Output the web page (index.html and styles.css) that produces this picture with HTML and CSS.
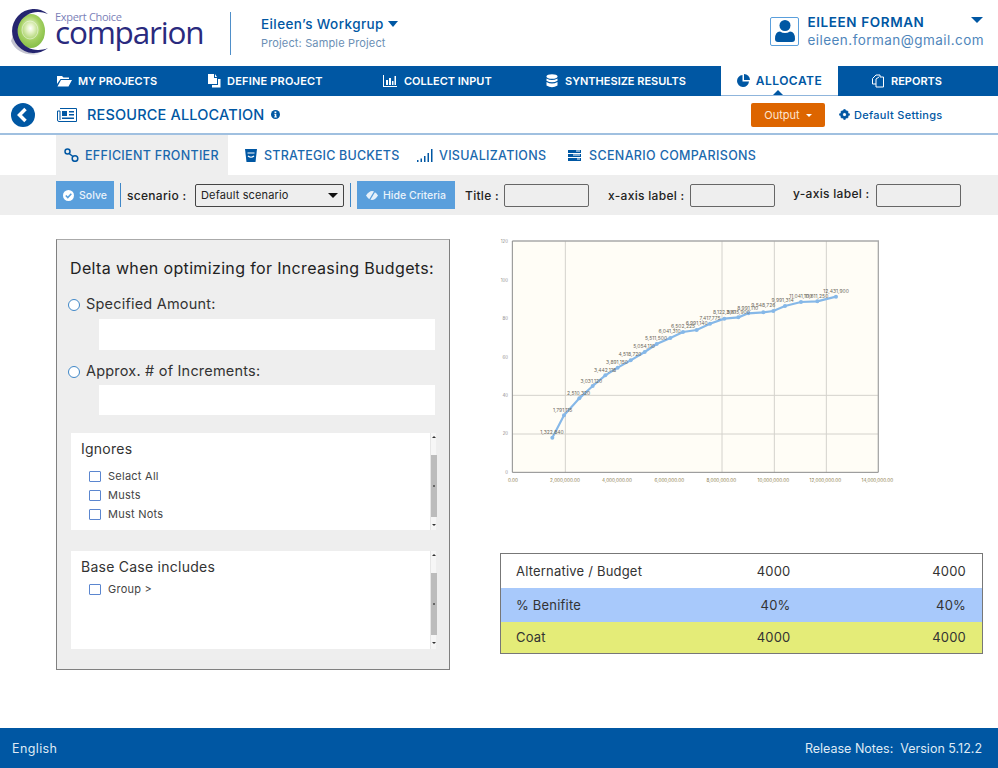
FILE: index.html
```html
<!DOCTYPE html>
<html lang="en">
<head>
    <meta charset="UTF-8">
    <title>Expert Choice Comparion - Resource Allocation</title>
    <link rel="stylesheet" href="styles.css">
</head>
<body>
    <header class="top">
        <div class="logo">
            <svg class="logo-mark" width="48" height="50" viewBox="0 0 48 50">
                <defs>
                    <radialGradient id="swirl" cx="0.48" cy="0.42" r="0.6">
                        <stop offset="0" stop-color="#ffffff"/>
                        <stop offset="0.2" stop-color="#e6f3c8"/>
                        <stop offset="0.6" stop-color="#a4d062"/>
                        <stop offset="1" stop-color="#84bd45"/>
                    </radialGradient>
                </defs>
                <path d="M5 34 Q12 50 34 47 Q16 46 7 28Z" fill="#c4c4d0"/>
                <ellipse cx="25" cy="24" rx="14" ry="17" fill="url(#swirl)"/>
                <ellipse cx="24" cy="23" rx="8" ry="9" fill="none" stroke="#ffffff" stroke-opacity="0.45"/>
                <path d="M42 7 A22 22 0 1 0 42 41 A21 19 0 1 1 42 7Z" fill="#25256f"/>
            </svg>
            <div class="logo-text">
                <span class="logo-small">Expert Choice</span>
                <span class="logo-big">comparion</span>
            </div>
        </div>
        <div class="workgroup">
            <div class="workgroup-name">Eileen’s Workgrup <span class="caret"></span></div>
            <div class="workgroup-project">Project: Sample Project</div>
        </div>
        <div class="user">
            <div class="user-pic">
                <svg width="20" height="22" viewBox="0 0 20 22"><circle cx="10" cy="5.500" r="5.500" fill="#0057a3"/><path d="M0 19 Q0 11.500 5 11.500 Q10 14.500 15 11.500 Q20 11.500 20 19 Q20 22 17 22 L3 22 Q0 22 0 19Z" fill="#0057a3"/></svg>
            </div>
            <div class="user-info">
                <div class="user-name">EILEEN FORMAN <span class="caret"></span></div>
                <div class="user-mail">eileen.forman@gmail.com</div>
            </div>
        </div>
    </header>

    <nav class="nav">
        <a class="nav-item w1">
            <svg width="15" height="12" viewBox="0 0 15 12"><path d="M0 1 H5 L6.500 2.500 H12 V4 H3.500 L0 9Z M4 5 H15 L11.500 11.500 H0.500Z" fill="#fff"/></svg>
            MY PROJECTS</a>
        <a class="nav-item w2">
            <svg width="13" height="14" viewBox="0 0 13 14"><path d="M0 0 H6 V4 H9 V10 H0Z M7 0 L9 3 H7Z" fill="#fff"/><path d="M10 5 H12.500 V13.500 H4 V11 H10Z" fill="#fff"/></svg>
            DEFINE PROJECT</a>
        <a class="nav-item w3">
            <svg width="14" height="12" viewBox="0 0 14 12"><path d="M0 0 H1 V11 H14 V12 H0Z M3 5 H5 V10 H3Z M6 3 H8 V10 H6Z M9 6 H10.500 V10 H9Z M11.500 1 H13 V10 H11.500Z" fill="#fff"/></svg>
            COLLECT INPUT</a>
        <a class="nav-item w4">
            <svg width="12" height="14" viewBox="0 0 12 14"><ellipse cx="6" cy="2.500" rx="5.500" ry="2.300" fill="#fff"/><path d="M0.500 4.500 Q6 7.500 11.500 4.500 V6.800 Q6 9.800 0.500 6.800Z M0.500 8 Q6 11 11.500 8 V11.500 Q6 15 0.500 11.500Z" fill="#fff"/></svg>
            SYNTHESIZE RESULTS</a>
        <a class="nav-item nav-active">
            <svg width="13" height="13" viewBox="0 0 13 13"><path d="M5.500 1 V7.500 H12 A6 6 0 1 1 5.500 1Z M7 0 A6 6 0 0 1 13 6 H7Z" fill="#0057a3"/></svg>
            ALLOCATE</a>
        <a class="nav-item nav-last">
            <svg width="14" height="14" viewBox="0 0 14 14"><path d="M5 1 H9 V3 H12.500 V13 H5 V10 H1.500 V4.500Z" fill="none" stroke="#fff"/><path d="M5 10 V5 L8 3" fill="none" stroke="#fff"/></svg>
            REPORTS</a>
    </nav>

    <section class="subhead">
        <svg class="back" width="24" height="24" viewBox="0 0 24 24"><circle cx="12" cy="12" r="12" fill="#0057a3"/><path d="M14.500 6 L8.500 12 L14.500 18" fill="none" stroke="#fff" stroke-width="3.500"/></svg>
        <svg class="paper" width="20" height="14" viewBox="0 0 20 14"><path d="M3 .5 H19.500 V13.500 H2 Q.5 13.500 .5 12 V3 H3 V12" fill="none" stroke="#0057a3"/><path d="M5 3 H10 V8 H5Z M12 3 H17 V4.500 H12Z M12 6 H17 V7.500 H12Z M5 9.500 H17 V11 H5Z" fill="#0057a3"/></svg>
        <h1 class="subhead-title">RESOURCE ALLOCATION</h1>
        <svg class="info" width="9" height="9" viewBox="0 0 9 9"><circle cx="4.500" cy="4.500" r="4.500" fill="#0057a3"/><path d="M3.500 1.500 H5.300 V3 H3.500Z M3.300 3.800 H5.300 V6.500 H5.800 V7.500 H3.200 V6.500 H3.800 V4.800 H3.300Z" fill="#fff"/></svg>
        <button class="output-btn">Output <span class="caret-small"></span></button>
        <a class="settings">
            <svg width="11" height="11" viewBox="0 0 11 11"><circle cx="5.500" cy="5.500" r="3.200" fill="none" stroke="#0057a3" stroke-width="2.400"/><path d="M4.500 0 H6.500 V11 H4.500Z M0 4.500 H11 V6.500 H0Z M1.400 2.800 L2.800 1.400 L9.600 8.200 L8.200 9.600Z M8.200 1.400 L9.600 2.800 L2.800 9.600 L1.400 8.200Z" fill="#0057a3" fill-opacity="0.85"/><circle cx="5.500" cy="5.500" r="1.500" fill="#fff"/></svg>
            Default Settings</a>
    </section>

    <section class="tabs">
        <a class="tab tab-active">
            <svg width="15" height="14" viewBox="0 0 15 14"><circle cx="3.500" cy="3.500" r="2.500" fill="none" stroke="#0057a3" stroke-width="1.500"/><circle cx="11" cy="10.500" r="2.800" fill="none" stroke="#0057a3" stroke-width="1.500"/><path d="M5 5.500 L9 8.500" stroke="#0057a3" stroke-width="1.500"/></svg>
            EFFICIENT FRONTIER</a>
        <a class="tab tab-buckets">
            <svg width="12" height="13" viewBox="0 0 12 13"><path d="M0 0 H12 L10.500 13 H1.500Z" fill="#0057a3"/><path d="M2.500 4 H9.500 M3 7 Q6 9.500 9 7" fill="none" stroke="#fff" stroke-width="1.200"/></svg>
            STRATEGIC BUCKETS</a>
        <a class="tab tab-vis">
            <svg width="16" height="13" viewBox="0 0 16 13"><path d="M0 11 H1.500 V13 H0Z M3.500 9.500 H5 V13 H3.500Z M7 7 H8.500 V13 H7Z M10.500 4 H12 V13 H10.500Z M14 0 H15.500 V13 H14Z" fill="#0057a3"/></svg>
            VISUALIZATIONS</a>
        <a class="tab tab-scen">
            <svg width="13" height="11" viewBox="0 0 13 11"><path d="M0 0 H13 V3 H0Z M0 4 H13 V7 H0Z M0 8 H13 V11 H0Z" fill="#0057a3"/><path d="M8 1 H12 M5 5 H12 M9 9 H12" stroke="#fff"/></svg>
            SCENARIO COMPARISONS</a>
    </section>

    <section class="toolbar">
        <button class="tool-btn solve-btn">
            <svg width="11" height="11" viewBox="0 0 11 11"><circle cx="5.500" cy="5.500" r="5.500" fill="#fff"/><path d="M2.800 5.500 L4.800 7.500 L8.300 3.800" fill="none" stroke="#5a9fdc" stroke-width="1.600"/></svg>
            Solve</button>
        <span class="tool-sep"></span>
        <label class="tool-label scenario-label">scenario :</label>
        <div class="select">Default scenario <span class="select-arrow"></span></div>
        <span class="tool-sep sep2"></span>
        <button class="tool-btn hide-btn">
            <svg width="12" height="9" viewBox="0 0 12 9"><path d="M0 4.500 Q3 0 6 0 Q9 0 12 4.500 Q9 9 6 9 Q3 9 0 4.500Z" fill="#fff" fill-opacity="0.85"/><path d="M9 0 L3.500 9" stroke="#5a9fdc" stroke-width="1.300"/></svg>
            Hide Criteria</button>
        <label class="tool-label title-label">Title :</label>
        <input class="tool-input" type="text">
        <label class="tool-label x-label">x-axis label :</label>
        <input class="tool-input" type="text">
        <label class="tool-label y-label">y-axis label :</label>
        <input class="tool-input" type="text">
    </section>

    <main class="content">
        <aside class="panel">
            <h2 class="panel-title">Delta when optimizing for Increasing Budgets:</h2>
            <div class="radio-row r1"><span class="radio"></span>Specified Amount:</div>
            <div class="white-field"></div>
            <div class="radio-row r2"><span class="radio"></span>Approx. # of Increments:</div>
            <div class="white-field f2"></div>

            <div class="list-box">
                <div class="list-body">
                    <h3 class="list-title">Ignores</h3>
                    <div class="check-row"><span class="check"></span>Selact All</div>
                    <div class="check-row"><span class="check"></span>Musts</div>
                    <div class="check-row"><span class="check"></span>Must Nots</div>
                </div>
                <div class="scrollbar"><span class="sb-arrow"></span><span class="sb-thumb"></span><span class="sb-arrow down"></span></div>
            </div>

            <div class="list-box box2">
                <div class="list-body">
                    <h3 class="list-title base">Base Case includes</h3>
                    <div class="check-row group"><span class="check"></span>Group &gt;</div>
                </div>
                <div class="scrollbar"><span class="sb-arrow"></span><span class="sb-thumb"></span><span class="sb-arrow down"></span></div>
            </div>
        </aside>

        <div class="right">
            <!-- chart: 3x zoom coordinates, hence the viewBox -->
            <svg class="chart" width="410" height="255" viewBox="0 0 1230 765">
                <rect x="67" y="18" width="1098" height="694" fill="#fffdf6"/>
                <g stroke="#d4d2cc" stroke-width="3">
                    <path d="M226 18 V712 M696 18 V712 M853 18 V712 M1009 18 V712 M67 481 H1165 M67 597 H1165"/>
                </g>
                <path d="M67 18 H1165 V712" fill="none" stroke="#a9a9a9" stroke-width="4"/>
                <path d="M67 18 V712 H1165" fill="none" stroke="#8b8b8b" stroke-width="3"/>
                <polyline class="curve" points="187,608 222,541 268,490 308,453 346,421 383,398 422,376 464,351 500,327 541,309 579,291 620,285 660,266 703,251 745,247 775,235 820,232 850,228 885,213 933,201 982,199 1038,185"/>
                <g fill="#86b8e8">
                    <circle cx="187" cy="608" r="6"/><circle cx="222" cy="541" r="6"/><circle cx="268" cy="490" r="6"/><circle cx="308" cy="453" r="6"/><circle cx="346" cy="421" r="6"/><circle cx="383" cy="398" r="6"/><circle cx="422" cy="376" r="6"/><circle cx="464" cy="351" r="6"/><circle cx="500" cy="327" r="6"/><circle cx="541" cy="309" r="6"/><circle cx="579" cy="291" r="6"/><circle cx="620" cy="285" r="6"/><circle cx="660" cy="266" r="6"/><circle cx="703" cy="251" r="6"/><circle cx="745" cy="247" r="6"/><circle cx="775" cy="235" r="6"/><circle cx="820" cy="232" r="6"/><circle cx="850" cy="228" r="6"/><circle cx="885" cy="213" r="6"/><circle cx="933" cy="201" r="6"/><circle cx="982" cy="199" r="6"/><circle cx="1038" cy="185" r="6"/>
                </g>
                <g class="pt-label" text-anchor="middle">
                    <text x="186" y="596">1,322,840</text><text x="218" y="530">1,791,115</text><text x="266" y="479">2,510,320</text><text x="304" y="443">3,031,120</text><text x="345" y="410">3,442,118</text><text x="381" y="386">3,891,150</text><text x="420" y="362">4,518,720</text><text x="462" y="339">5,054,110</text><text x="498" y="316">5,511,500</text><text x="539" y="295">6,041,310</text><text x="579" y="279">6,502,225</text><text x="620" y="270">6,991,140</text><text x="660" y="255">7,417,775</text><text x="703" y="238">8,122,300</text><text x="745" y="236">8,615,900</text><text x="773" y="224">8,991,110</text><text x="820" y="216">9,548,726</text><text x="878" y="202">9,991,314</text><text x="932" y="189">11,041,100</text><text x="980" y="189">11,611,250</text><text x="1038" y="174">12,431,900</text>
                </g>
                <g class="y-tick" text-anchor="end">
                    <text x="54" y="24">120</text><text x="54" y="140">100</text><text x="54" y="255">80</text><text x="54" y="372">60</text><text x="54" y="486">40</text><text x="54" y="601">20</text><text x="54" y="716">0</text>
                </g>
                <g class="x-tick" text-anchor="middle">
                    <text x="69" y="741">0.00</text><text x="225" y="741">2,000,000.00</text><text x="381" y="741">4,000,000.00</text><text x="538" y="741">6,000,000.00</text><text x="694" y="741">8,000,000.00</text><text x="850" y="741">10,000,000.00</text><text x="1006" y="741">12,000,000.00</text><text x="1162" y="741">14,000,000.00</text>
                </g>
            </svg>

            <table class="budget-table">
                <tr>
                    <td>Alternative / Budget</td>
                    <td class="mid">4000</td>
                    <td class="end">4000</td>
                </tr>
                <tr class="row-blue">
                    <td>% Benifite</td>
                    <td class="mid">40%</td>
                    <td class="end">40%</td>
                </tr>
                <tr class="row-yellow">
                    <td>Coat</td>
                    <td class="mid">4000</td>
                    <td class="end">4000</td>
                </tr>
            </table>
        </div>
    </main>

    <footer class="footer">
        <span class="lang">English</span>
        <span>Release Notes:&nbsp; Version 5.12.2</span>
    </footer>
</body>
</html>
```

FILE: styles.css
```css
* {
    box-sizing: border-box;
}

body {
    margin: 0;
    width: 998px;
    height: 768px;
    overflow: hidden;
    display: flex;
    flex-direction: column;
    font-family: Inter, "Liberation Sans", sans-serif;
    background-color: white;
    color: #333;
}

a {
    color: inherit;
}

.caret {
    display: inline-block;
    border-left: 5px solid transparent;
    border-right: 5px solid transparent;
    border-top: 6px solid #0057a3;
    vertical-align: 2px;
}

/* top header */
.top {
    height: 66px;
    display: flex;
    align-items: center;
}

.logo {
    width: 230px;
    height: 66px;
    display: flex;
    padding: 7px 0 0 6px;
}

.logo-mark {
    flex: none;
}

.logo-text {
    margin-left: 1px;
    display: flex;
    flex-direction: column;
    font-family: "Open Sans", sans-serif;
}

.logo-small {
    font-size: 11px;
    line-height: 12px;
    margin-top: 4px;
    color: #7b7fb8;
    letter-spacing: -0.3px;
}

.logo-big {
    font-size: 31.500px;
    line-height: 16px;
    letter-spacing: -1.200px;
    color: #2a2a7e;
    margin-top: 1px;
}

.workgroup {
    height: 43px;
    border-left: 1px solid #4f8fc9;
    padding: 3px 0 0 30px;
}

.workgroup-name {
    font-size: 13.500px;
    line-height: 18px;
    font-weight: 500;
    letter-spacing: .4px;
    color: #0057a3;
}

.workgroup-project {
    font-size: 11px;
    line-height: 14px;
    margin-top: 3px;
    letter-spacing: .15px;
    color: #6b8fb5;
}

.user {
    margin-left: auto;
    margin-right: 14px;
    margin-bottom: 4px;
    display: flex;
    align-items: center;
}

.user-pic {
    width: 29px;
    height: 29px;
    border: 1px solid #5a9fdc;
    border-radius: 2px;
    display: flex;
    align-items: center;
    justify-content: center;
    margin-right: 8px;
}

.user-name {
    width: 176px;
    display: flex;
    justify-content: space-between;
    align-items: center;
    font-size: 13.500px;
    line-height: 18px;
    font-weight: 600;
    letter-spacing: .6px;
    color: #0057a3;
}

.user-name .caret {
    border-left-width: 6px;
    border-right-width: 6px;
    border-top-width: 6px;
    margin-bottom: 4px;
}

.user-mail {
    font-size: 13.500px;
    line-height: 18px;
    letter-spacing: .45px;
    color: #4f86bb;
}

/* main nav */
.nav {
    height: 30px;
    padding-left: 57px;
    display: flex;
    background-color: #0057a3;
    color: white;
    font-size: 11px;
    font-weight: 600;
}

.nav-item {
    display: flex;
    align-items: center;
    gap: 6px;
}

.w1 {
    width: 151px;
}

.w2 {
    width: 175px;
    letter-spacing: .2px;
}

.w3 {
    width: 163px;
    gap: 7px;
}

.w4 {
    width: 175px;
    gap: 7px;
}

.nav-active {
    position: relative;
    width: 117px;
    justify-content: center;
    background-color: white;
    border-bottom: 1px solid #8fb5dc;
    color: #0057a3;
    font-size: 12px;
    letter-spacing: .5px;
}

.nav-active::after {
    content: "";
    position: absolute;
    bottom: 0;
    left: 52px;
    border-left: 5px solid transparent;
    border-right: 5px solid transparent;
    border-bottom: 5px solid #0057a3;
}

.nav-last {
    margin-left: 33px;
}

/* sub header */
.subhead {
    height: 39px;
    display: flex;
    align-items: center;
    border-bottom: 2px solid #a0c0e0;
    color: #0057a3;
}

.back {
    margin-left: 11px;
}

.paper {
    margin-left: 22px;
}

.subhead-title {
    margin: 0 0 0 10px;
    font-size: 14.500px;
    font-weight: 500;
    letter-spacing: .17px;
}

.info {
    margin-left: 7px;
}

.output-btn {
    margin-left: auto;
    width: 74px;
    height: 24px;
    border: none;
    border-radius: 2px;
    background-color: #dd6500;
    color: #fde6d0;
    font-family: inherit;
    font-size: 11px;
    padding: 0;
}

.caret-small {
    display: inline-block;
    margin-left: 3px;
    border-left: 3px solid transparent;
    border-right: 3px solid transparent;
    border-top: 3px solid white;
    vertical-align: 2px;
}

.settings {
    display: flex;
    align-items: center;
    gap: 4px;
    width: 123px;
    margin-left: 14px;
    margin-right: 36px;
    font-size: 11px;
    font-weight: 500;
    letter-spacing: .3px;
}

/* tabs */
.tabs {
    height: 40px;
    padding-left: 56px;
    display: flex;
    color: #1a68ad;
    font-size: 12.500px;
    font-weight: 500;
    letter-spacing: .3px;
    white-space: nowrap;
}

.tab {
    display: flex;
    align-items: center;
    gap: 6px;
}

.tab-active {
    width: 172px;
    padding-left: 8px;
    background-color: #eeeeee;
}

.tab-buckets {
    width: 172px;
    padding-left: 17px;
    gap: 7px;
    letter-spacing: .2px;
}

.tab-vis {
    width: 168px;
    padding-left: 17px;
}

.tab-scen {
    gap: 8px;
    letter-spacing: .35px;
}

/* toolbar */
.toolbar {
    height: 40px;
    padding-left: 56px;
    display: flex;
    align-items: center;
    background-color: #eeeeee;
    color: #222;
}

.tool-btn {
    height: 28px;
    display: flex;
    align-items: center;
    justify-content: center;
    gap: 5px;
    border: none;
    padding: 0;
    background-color: #5a9fdc;
    color: #eaf3fb;
    font-family: inherit;
    font-size: 10.500px;
    font-weight: 500;
}

.solve-btn {
    width: 58px;
}

.hide-btn {
    width: 98px;
    margin-left: 6px;
}

.tool-sep {
    width: 1px;
    height: 24px;
    margin-left: 6px;
    background-color: #3f87c7;
}

.sep2 {
    margin-left: 6px;
}

.tool-label {
    font-size: 12px;
    font-weight: 500;
    letter-spacing: .3px;
    white-space: nowrap;
}

.scenario-label {
    width: 68px;
    margin-left: 6px;
}

.select {
    position: relative;
    width: 149px;
    height: 23px;
    padding-left: 5px;
    border: 1px solid #444;
    border-radius: 2px;
    font-size: 11px;
    line-height: 21px;
    letter-spacing: .15px;
}

.select-arrow {
    position: absolute;
    right: 5px;
    top: 8px;
    border-left: 5px solid transparent;
    border-right: 5px solid transparent;
    border-top: 5px solid #111;
}

.title-label {
    width: 39px;
    margin-left: 10px;
}

.tool-input {
    width: 85px;
    height: 23px;
    padding: 0;
    border: 1px solid #666;
    border-radius: 2px;
    background-color: #eeeeee;
}

.x-label {
    width: 82px;
    margin-left: 19px;
}

.y-label {
    width: 83px;
    margin-left: 18px;
    padding-bottom: 3px;
}

/* content */
.content {
    flex: 1;
    display: flex;
    align-items: flex-start;
    padding: 24px 0 0 56px;
}

.panel {
    width: 394px;
    height: 431px;
    background-color: #eeeeee;
    border: 1px solid #808080;
    border-top-color: #aaa;
    padding: 0 14px 0 11px;
}

.panel-title {
    margin: 18px 0 0 2px;
    font-size: 16px;
    line-height: 20px;
    font-weight: 400;
    letter-spacing: .35px;
    white-space: nowrap;
    color: #222;
}

.radio-row {
    display: flex;
    align-items: center;
    font-size: 14.500px;
    line-height: 20px;
    letter-spacing: .2px;
    color: #333;
}

.r1 {
    margin-top: 16px;
}

.r2 {
    margin-top: 11px;
}

.radio {
    width: 12px;
    height: 12px;
    margin: 2px 6px 0 0;
    border: 1px solid #3f87c7;
    border-radius: 50%;
    background-color: white;
}

.white-field {
    height: 31px;
    margin: 5px 0 0 31px;
    background-color: white;
}

.f2 {
    height: 30px;
    margin-top: 4px;
}

.list-box {
    height: 97px;
    margin: 18px 0 0 3px;
    display: flex;
    background-color: white;
}

.box2 {
    height: 98px;
    margin-top: 21px;
}

.list-body {
    flex: 1;
}

.list-title {
    margin: 6px 0 0 10px;
    font-size: 14px;
    line-height: 20px;
    font-weight: 400;
    letter-spacing: .25px;
    color: #333;
}

.check-row {
    display: flex;
    align-items: center;
    height: 19px;
    margin-left: 18px;
    font-size: 11px;
    letter-spacing: .25px;
    color: #444;
}

.list-title + .check-row {
    margin-top: 7px;
}

.list-title.base + .check-row {
    margin-top: 2px;
}

.check {
    width: 12px;
    height: 11px;
    margin: 2px 7px 0 0;
    border: 1px solid #5b86cf;
    border-radius: 1px;
}

.scrollbar {
    width: 6px;
    margin-right: -1px;
    display: flex;
    flex-direction: column;
    align-items: center;
    background-color: #f6f6f6;
    border-left: 1px solid #e6e6e6;
}

.sb-arrow {
    margin: 3px 0;
    flex: none;
    border-left: 2px solid transparent;
    border-right: 2px solid transparent;
    border-bottom: 2px solid #333;
}

.sb-arrow.down {
    margin-top: 7px;
    border-bottom: none;
    border-top: 2px solid #333;
}

.sb-thumb {
    width: 6px;
    height: 62px;
    margin-top: 14px;
    flex: none;
    background: radial-gradient(circle, #666 1px, #bcbcbc 1.500px);
}

.right {
    width: 483px;
    margin-left: 50px;
    margin-top: -4px;
}

.chart {
    display: block;
    margin-left: -10px;
}

.curve {
    fill: none;
    stroke: #86b8e8;
    stroke-width: 6.500;
}

.pt-label text {
    font-size: 15px;
    fill: #6e6a5e;
}

.y-tick text {
    font-size: 13px;
    fill: #8a8a8a;
}

.x-tick text {
    font-size: 14px;
    fill: #8a7d4f;
}

.budget-table {
    width: 483px;
    margin-top: 63px;
    border-collapse: collapse;
    border: 1px solid #777;
    font-size: 13px;
    letter-spacing: .2px;
    color: #333;
}

.budget-table td {
    height: 34px;
    padding: 0 0 0 15px;
}

.budget-table .row-yellow td {
    height: 32px;
}

.budget-table .mid {
    width: 134px;
    padding: 0;
    text-align: right;
}

.budget-table .row-yellow .mid {
    padding: 0;
}

.budget-table .end {
    width: 192px;
    text-align: right;
    padding: 0 16px 0 0;
}

.row-blue {
    background-color: #a8c9fb;
}

.row-yellow {
    background-color: #e4ec78;
}

/* footer */
.footer {
    height: 40px;
    padding: 0 16px 0 12px;
    display: flex;
    align-items: center;
    justify-content: space-between;
    background-color: #0057a3;
    color: #dfeaf5;
    font-size: 12.500px;
}

.lang {
    letter-spacing: .4px;
}
```
